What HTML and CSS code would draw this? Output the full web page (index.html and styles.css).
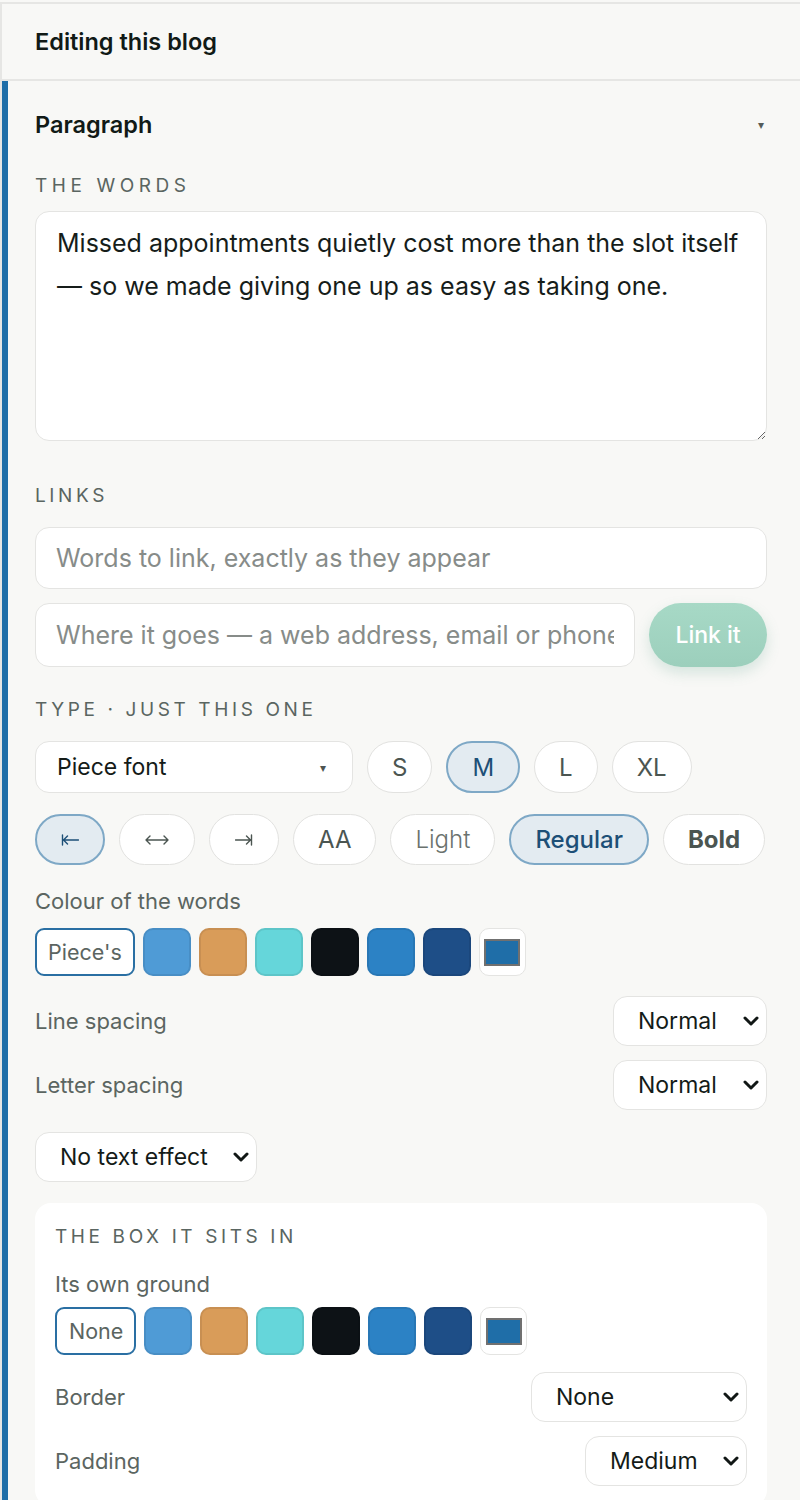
FILE: index.html
```html
<!DOCTYPE html>
<html lang="en">
<head>
<meta charset="utf-8">
<title>Editing this blog</title>
<link rel="stylesheet" href="styles.css">
</head>
<body>
<div class="panel">
  <header class="head">Editing this blog</header>
  <section class="block">
    <div class="block-head">
      <span class="block-title">Paragraph</span>
      <span class="caret">▾</span>
    </div>

    <div class="label label-words">The words</div>
    <textarea class="words">Missed appointments quietly cost more than the slot itself — so we made giving one up as easy as taking one.</textarea>

    <div class="label label-links">Links</div>
    <input class="field field-first" type="text" placeholder="Words to link, exactly as they appear">
    <div class="link-row">
      <input class="field field-grow" type="text" placeholder="Where it goes — a web address, email or phone">
      <button class="link-btn" type="button">Link it</button>
    </div>

    <div class="label label-type">Type · just this one</div>
    <div class="pill-row row-one">
      <div class="font-pick"><span>Piece font</span><span class="mini-caret">▾</span></div>
      <button class="pill" type="button">S</button>
      <button class="pill on" type="button">M</button>
      <button class="pill" type="button">L</button>
      <button class="pill" type="button">XL</button>
    </div>
    <div class="pill-row row-two">
      <button class="pill arrow on" type="button" aria-label="Align left">
        <svg class="arrow-icon" width="18" height="12" viewBox="0 0 18 12"><path d="M1.5 1v10M2.5 6h15M2.5 6l4-4M2.5 6l4 4"/></svg>
      </button>
      <button class="pill arrow wide" type="button" aria-label="Centre">
        <svg class="arrow-icon" width="24" height="12" viewBox="0 0 24 12"><path d="M1 6h22M1 6l4-4M1 6l4 4M23 6l-4-4M23 6l-4 4"/></svg>
      </button>
      <button class="pill arrow" type="button" aria-label="Align right">
        <svg class="arrow-icon" width="18" height="12" viewBox="0 0 18 12"><path d="M16.5 1v10M0.5 6h15M15.5 6l-4-4M15.5 6l-4 4"/></svg>
      </button>
      <button class="pill" type="button">AA</button>
      <button class="pill light" type="button">Light</button>
      <button class="pill on medium" type="button">Regular</button>
      <button class="pill bold" type="button">Bold</button>
    </div>

    <div class="sub-label label-colour">Colour of the words</div>
    <div class="swatches">
      <button class="swatch-word" type="button">Piece's</button>
      <span class="swatch sw-sky"></span>
      <span class="swatch sw-sand"></span>
      <span class="swatch sw-aqua"></span>
      <span class="swatch sw-ink"></span>
      <span class="swatch sw-blue"></span>
      <span class="swatch sw-navy"></span>
      <span class="swatch-custom"><span class="custom-fill"></span></span>
    </div>

    <div class="set-row row-line">
      <span class="sub-label">Line spacing</span>
      <span class="sel-wrap">
        <select class="sel sel-norm"><option>Normal</option><option>Tight</option><option>Airy</option></select>
        <svg class="chev" width="16" height="12" viewBox="0 0 16 12"><path d="M2 3l6 6 6-6"/></svg>
      </span>
    </div>
    <div class="set-row row-letter">
      <span class="sub-label">Letter spacing</span>
      <span class="sel-wrap">
        <select class="sel sel-norm"><option>Normal</option><option>Tight</option><option>Wide</option></select>
        <svg class="chev" width="16" height="12" viewBox="0 0 16 12"><path d="M2 3l6 6 6-6"/></svg>
      </span>
    </div>
    <div class="effect-row">
      <span class="sel-wrap">
        <select class="sel sel-effect"><option>No text effect</option><option>Shadow</option><option>Glow</option></select>
        <svg class="chev" width="16" height="12" viewBox="0 0 16 12"><path d="M2 3l6 6 6-6"/></svg>
      </span>
    </div>

    <div class="box-card">
      <div class="label">The box it sits in</div>
      <div class="sub-label label-ground">Its own ground</div>
      <div class="swatches swatches-box">
        <button class="swatch-word" type="button">None</button>
        <span class="swatch sw-sky"></span>
        <span class="swatch sw-sand"></span>
        <span class="swatch sw-aqua"></span>
        <span class="swatch sw-ink"></span>
        <span class="swatch sw-blue"></span>
        <span class="swatch sw-navy"></span>
        <span class="swatch-custom"><span class="custom-fill"></span></span>
      </div>
      <div class="set-row row-border">
        <span class="sub-label">Border</span>
        <span class="sel-wrap">
          <select class="sel sel-border"><option>None</option><option>Thin line</option><option>Thick line</option></select>
          <svg class="chev" width="16" height="12" viewBox="0 0 16 12"><path d="M2 3l6 6 6-6"/></svg>
        </span>
      </div>
      <div class="set-row row-pad">
        <span class="sub-label">Padding</span>
        <span class="sel-wrap">
          <select class="sel sel-pad"><option>Medium</option><option>Small</option><option>Large</option></select>
          <svg class="chev" width="16" height="12" viewBox="0 0 16 12"><path d="M2 3l6 6 6-6"/></svg>
        </span>
      </div>
    </div>
  </section>
</div>
</body>
</html>
```

FILE: styles.css
```css
* { box-sizing: border-box; }

html, body {
  margin: 0;
  padding: 0;
  background: #f8f8f6;
}

body {
  font-family: Inter, "Noto Sans", "Liberation Sans", sans-serif;
  color: #141b18;
  padding-top: 2px;
}

.panel {
  border-top: 2px solid #e6e6e4;
  border-left: 2px solid #e6e6e4;
  min-height: 1500px;
}

.head {
  height: 77px;
  display: flex;
  align-items: center;
  padding: 0 33px;
  font-size: 23.5px;
  font-weight: 600;
  color: #111a16;
  border-bottom: 2px solid #e6e6e4;
}

.block {
  border-left: 6px solid #1f6ea8;
  padding: 29px 33px 40px 27px;
  display: flex;
  flex-direction: column;
}

.block-head {
  display: flex;
  align-items: center;
  justify-content: space-between;
  height: 28px;
}

.block-title {
  font-size: 23.5px;
  font-weight: 600;
  color: #111a16;
}

.caret {
  font-size: 12px;
  color: #555c59;
  margin-right: 3px;
}

.label {
  font-size: 19px;
  line-height: 20px;
  letter-spacing: 0.19em;
  text-transform: uppercase;
  color: #5a6561;
}

.label-words { margin-top: 38px; letter-spacing: 0.24em; }
.label-links { margin-top: 45px; }
.label-type { margin-top: 33px; }

.words {
  margin-top: 15px;
  height: 230px;
  width: 100%;
  padding: 10px 21px;
  border: 1.5px solid #e4e4e2;
  border-radius: 14px;
  background: #fff;
  font-family: inherit;
  font-size: 25px;
  line-height: 43px;
  color: #161d1a;
  resize: vertical;
  outline: none;
}

.field {
  height: 62px;
  width: 100%;
  padding: 0 20px;
  border: 1.5px solid #e4e4e2;
  border-radius: 14px;
  background: #fff;
  font-family: inherit;
  font-size: 25px;
  color: #141b18;
  outline: none;
}

.field::placeholder { color: #878c89; }

.field-first { margin-top: 21px; }

.link-row {
  margin-top: 14px;
  display: flex;
  gap: 14px;
  height: 64px;
}

.field-grow {
  flex: 1;
  height: auto;
  min-width: 0;
}

.link-btn {
  flex: none;
  width: 118px;
  border: none;
  border-radius: 32px;
  background: linear-gradient(#a7d9c6, #9ccfbc);
  color: #fff;
  font-family: inherit;
  font-size: 23px;
  font-weight: 500;
  box-shadow: 0 6px 14px rgba(90, 160, 135, 0.22);
}

.pill-row {
  display: flex;
  gap: 14px;
  height: 52px;
}

.row-one { margin-top: 21px; }
.row-two { margin-top: 21px; height: 51px; }

.font-pick {
  width: 318px;
  display: flex;
  align-items: center;
  justify-content: space-between;
  padding: 0 26px 0 21px;
  background: #fff;
  border: 1.5px solid #e4e4e2;
  border-radius: 14px;
  font-size: 23px;
  color: #141b18;
}

.mini-caret {
  font-size: 12px;
  color: #4d5451;
}

.pill {
  padding: 0 24px;
  background: #fff;
  border: 1.5px solid #e2e2e0;
  border-radius: 26px;
  font-family: inherit;
  font-size: 24px;
  color: #4b5551;
}

.pill.on {
  background: #e3ebf1;
  border: 2px solid #7ea8c6;
  color: #1d4f77;
}

.pill.arrow {
  width: 70px;
  padding: 0;
  display: flex;
  align-items: center;
  justify-content: center;
  color: #4b5551;
}

.pill.arrow.wide { width: 76px; }

.pill.arrow.on { color: #1d4f77; }

.arrow-icon {
  fill: none;
  stroke: currentColor;
  stroke-width: 1.4;
  stroke-linecap: round;
  stroke-linejoin: round;
}

.pill.light { font-weight: 300; color: #6a726e; }
.pill.medium { font-weight: 500; }
.pill.bold { font-weight: 700; color: #4b5551; }

.sub-label {
  font-size: 22px;
  line-height: 24px;
  color: #5b6561;
}

.label-colour { margin-top: 24px; }

.swatches {
  margin-top: 15px;
  display: flex;
  gap: 8px;
  height: 48px;
}

.swatch-word {
  padding: 0 11px;
  background: #fff;
  border: 2px solid #2a6fa3;
  border-radius: 9px;
  font-family: inherit;
  font-size: 21.5px;
  color: #5b6561;
}

.swatch {
  width: 48px;
  height: 48px;
  border-radius: 10px;
  border: 2px solid rgba(0, 0, 0, 0.08);
}

.sw-sky { background: #4f9bd6; }
.sw-sand { background: #d99c59; }
.sw-aqua { background: #65d6da; }
.sw-ink { background: #0d1216; }
.sw-blue { background: #2c82c5; }
.sw-navy { background: #1e4e87; }

.swatch-custom {
  width: 47px;
  height: 48px;
  border-radius: 10px;
  background: #fff;
  border: 1.5px solid #e4e4e2;
  display: flex;
  align-items: center;
  justify-content: center;
}

.custom-fill {
  width: 36px;
  height: 27px;
  background: #1f6ea8;
  border: 2px solid #707070;
}

.set-row {
  display: flex;
  align-items: center;
  justify-content: space-between;
}

.row-line { margin-top: 20px; }
.row-letter { margin-top: 14px; }

.effect-row {
  margin-top: 22px;
  display: flex;
}

.sel-wrap {
  position: relative;
  display: flex;
}

.sel {
  appearance: none;
  -webkit-appearance: none;
  height: 50px;
  padding: 0 30px 0 24px;
  background-color: #fff;
  border: 1.5px solid #e4e4e2;
  border-radius: 14px;
  font-family: inherit;
  font-size: 23px;
  color: #141b18;
  outline: none;
}

.chev {
  position: absolute;
  right: 8px;
  top: 19px;
  fill: none;
  stroke: #111715;
  stroke-width: 3;
  stroke-linecap: round;
  stroke-linejoin: round;
  pointer-events: none;
}

.sel-norm { width: 154px; }
.sel-effect { width: 222px; }
.sel-border { width: 216px; }
.sel-pad { width: 162px; }

.box-card {
  margin-top: 21px;
  background: #fff;
  border-radius: 16px;
  padding: 24px 20px 20px 20px;
  display: flex;
  flex-direction: column;
}

.label-ground { margin-top: 25px; }

.swatches-box { margin-top: 11px; }
.swatches-box .swatch-word { padding: 0 12px; width: 81px; }

.row-border { margin-top: 17px; }
.row-pad { margin-top: 14px; }
```
